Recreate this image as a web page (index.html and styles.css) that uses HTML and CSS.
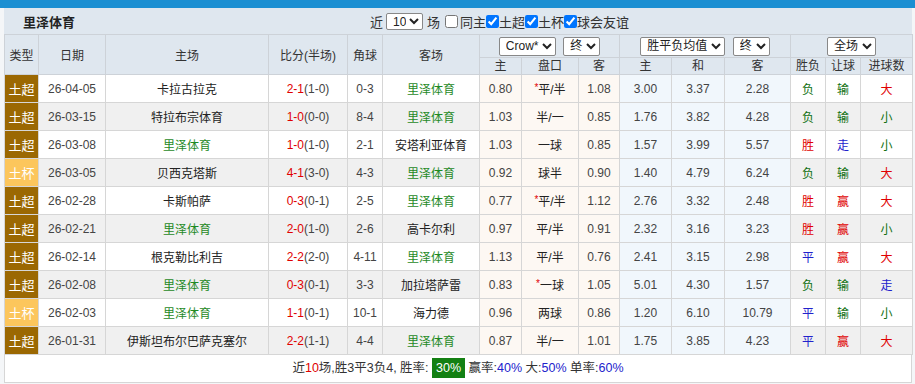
FILE: index.html
```html
<!DOCTYPE html>
<html lang="zh-CN">
<head>
    <meta charset="UTF-8">
    <title>里泽体育 - 近期战绩</title>
    <link rel="stylesheet" href="styles.css">
</head>
<body>
    <div class="topbar"></div>
    <div class="panel">
        <div class="panel-head">
            <div class="team-title">里泽体育</div>
            <div class="filters">
                <span>近</span>
                <select class="sel sel-count">
                    <option>10</option>
                    <option>20</option>
                </select>
                <span>场</span>
                <label class="first"><input type="checkbox"><span>同主</span></label>
                <label><input type="checkbox" checked>土超</label>
                <label><input type="checkbox" checked>土杯</label>
                <label><input type="checkbox" checked>球会友谊</label>
            </div>
        </div>
        <table class="records">
            <colgroup>
                <col style="width:34px"><col style="width:67px"><col style="width:163px"><col style="width:79px">
                <col style="width:35px"><col style="width:97px"><col style="width:42px"><col style="width:57px">
                <col style="width:41px"><col style="width:52px"><col style="width:53px"><col style="width:66px">
                <col style="width:35px"><col style="width:35px"><col style="width:52px">
            </colgroup>
            <thead>
                <tr class="head-top">
                    <th rowspan="2">类型</th>
                    <th rowspan="2">日期</th>
                    <th rowspan="2">主场</th>
                    <th rowspan="2">比分(半场)</th>
                    <th rowspan="2">角球</th>
                    <th rowspan="2">客场</th>
                    <th colspan="3">
                        <select class="sel"><option>Crow*</option></select>
                        <select class="sel"><option>终</option></select>
                    </th>
                    <th colspan="3">
                        <select class="sel"><option>胜平负均值</option></select>
                        <select class="sel"><option>终</option></select>
                    </th>
                    <th colspan="3">
                        <select class="sel"><option>全场</option></select>
                    </th>
                </tr>
                <tr class="head-sub">
                    <th>主</th><th>盘口</th><th>客</th>
                    <th>主</th><th>和</th><th>客</th>
                    <th>胜负</th><th>让球</th><th>进球数</th>
                </tr>
            </thead>
            <tbody id="rows"></tbody>
        </table>
        <div class="summary">
            近<span class="red">10</span>场,胜3平3负4, 胜率: <span class="rate">30%</span>
            赢率:<span class="blue">40%</span> 大:<span class="blue">50%</span> 单率:<span class="blue">60%</span>
        </div>
    </div>
    <script>
        // Match data: league, date, home, score, half, corners, away, odds..., results
        const matches = [
            ['土超', '26-04-05', '卡拉古拉克', '2-1', '1-0', '0-3', '里泽体育', '0.80', '*平/半', '1.08', '3.00', '3.37', '2.28', '负', '输', '大'],
            ['土超', '26-03-15', '特拉布宗体育', '1-0', '0-0', '8-4', '里泽体育', '1.03', '半/一', '0.85', '1.76', '3.82', '4.28', '负', '输', '小'],
            ['土超', '26-03-08', '里泽体育', '1-0', '1-0', '2-1', '安塔利亚体育', '1.03', '一球', '0.85', '1.57', '3.99', '5.57', '胜', '走', '小'],
            ['土杯', '26-03-05', '贝西克塔斯', '4-1', '3-0', '4-3', '里泽体育', '0.92', '球半', '0.90', '1.40', '4.79', '6.24', '负', '输', '大'],
            ['土超', '26-02-28', '卡斯帕萨', '0-3', '0-1', '2-5', '里泽体育', '0.77', '*平/半', '1.12', '2.76', '3.32', '2.48', '胜', '赢', '大'],
            ['土超', '26-02-21', '里泽体育', '2-0', '1-0', '2-6', '高卡尔利', '0.97', '平/半', '0.91', '2.32', '3.16', '3.23', '胜', '赢', '小'],
            ['土超', '26-02-14', '根克勒比利吉', '2-2', '2-0', '4-11', '里泽体育', '1.13', '平/半', '0.76', '2.41', '3.15', '2.98', '平', '赢', '大'],
            ['土超', '26-02-08', '里泽体育', '0-3', '0-1', '3-3', '加拉塔萨雷', '0.83', '*一球', '1.05', '5.01', '4.30', '1.57', '负', '输', '走'],
            ['土杯', '26-02-03', '里泽体育', '1-1', '0-1', '10-1', '海力德', '0.96', '两球', '0.86', '1.20', '6.10', '10.79', '平', '输', '小'],
            ['土超', '26-01-31', '伊斯坦布尔巴萨克塞尔', '2-2', '1-1', '4-4', '里泽体育', '0.87', '半/一', '1.01', '1.75', '3.85', '4.23', '平', '赢', '大']
        ];

        const resultClass = { '胜': 'win', '赢': 'win', '大': 'win', '负': 'lose', '输': 'lose', '小': 'lose', '平': 'draw', '走': 'draw' };
        const us = '里泽体育';

        function team(name) {
            return name === us ? `<span class="us">${name}</span>` : name;
        }

        function line(text) {
            return text.startsWith('*') ? `<span class="star">*</span>${text.slice(1)}` : text;
        }

        const tbody = document.getElementById('rows');
        matches.forEach(function(m) {
            const tr = document.createElement('tr');
            tr.innerHTML = `
                <td class="league ${m[0] === '土杯' ? 'cup' : ''}">${m[0]}</td>
                <td class="num">${m[1]}</td>
                <td>${team(m[2])}</td>
                <td class="num"><span class="red">${m[3]}</span>(${m[4]})</td>
                <td class="num">${m[5]}</td>
                <td>${team(m[6])}</td>
                <td class="num odds">${m[7]}</td>
                <td class="odds">${line(m[8])}</td>
                <td class="num odds">${m[9]}</td>
                <td class="num euro">${m[10]}</td>
                <td class="num euro">${m[11]}</td>
                <td class="num euro">${m[12]}</td>
                <td class="${resultClass[m[13]]}">${m[13]}</td>
                <td class="${resultClass[m[14]]}">${m[14]}</td>
                <td class="${resultClass[m[15]]}">${m[15]}</td>`;
            tbody.appendChild(tr);
        });
    </script>
</body>
</html>
```

FILE: styles.css
```css
:root {
    --bar-color: #1b8fd2;
    --head-bg: #dfe7ef;
    --line-color: #cdd2d8;
    --text-color: #333;
    --green: #1f8a1f;
    --red: #e00000;
    --blue: #2222cc;
}

body {
    margin: 0;
    background-color: #f4f6f8;
    font-family: 'Liberation Sans', 'Noto Sans CJK SC', sans-serif;
    font-size: 12px;
    color: var(--text-color);
}

.topbar {
    height: 8px;
    background-color: var(--bar-color);
}

.panel {
    margin: 0 3px 0 4px;
    background-color: white;
}

.panel-head {
    display: flex;
    align-items: center;
    height: 26px;
    background-color: var(--head-bg);
}

.team-title {
    width: 347px;
    padding-left: 19px;
    font-size: 13px;
    font-weight: bold;
    color: #222;
}

.filters {
    display: flex;
    align-items: center;
    font-size: 13px;
}

.filters label {
    display: flex;
    align-items: center;
}

.filters label.first {
    margin-left: 5px;
}

.filters label.first span {
    margin-left: 2px;
}

.filters input {
    margin: 0;
    width: 13px;
    height: 13px;
}

.sel {
    height: 19px;
    padding: 0 0 0 2px;
    font-family: inherit;
    font-size: 12px;
    color: #222;
    background-color: white;
    border: 1px solid #888;
    border-radius: 2px;
}

.sel-count {
    width: 37px;
    height: 17px;
    margin: 0 4px 0 3px;
}

.records {
    width: 908px;
    table-layout: fixed;
    border-collapse: collapse;
}

.records th {
    background-color: var(--head-bg);
    border: 1px solid var(--line-color);
    font-weight: normal;
    color: #333;
    padding: 0;
    text-align: center;
}

.head-top th {
    height: 22px;
}

.head-sub th {
    height: 16px;
    line-height: 16px;
}

.head-top .sel + .sel {
    margin-left: 4px;
}

.records td {
    height: 27px;
    padding: 0;
    border: 1px solid #d6d6d6;
    text-align: center;
    white-space: nowrap;
    color: #222;
}

.records tbody tr:nth-child(even) td {
    background-color: #f0f0f0;
}

.records tbody tr td.num {
    color: #444;
}

.records tbody tr td.league {
    background-color: #9b6802;
    color: white;
    font-size: 13px;
}

.records tbody tr td.league.cup {
    background-color: #fcc65c;
}

.records tbody tr td.odds {
    background-color: #fdf8f3;
}

.records tbody tr td.euro {
    background-color: #f1f7fc;
}

.us {
    color: var(--green);
}

.red, .star {
    color: var(--red);
}

.star {
    font-size: 10px;
    vertical-align: 3px;
}

.records tbody tr td.win {
    color: var(--red);
}

.records tbody tr td.lose {
    color: #107010;
}

.records tbody tr td.draw {
    color: var(--blue);
}

.summary {
    height: 27px;
    line-height: 27px;
    text-align: center;
    border: 1px solid #d6d6d6;
    border-top: none;
    font-size: 12.5px;
    color: #333;
}

.rate {
    display: inline-block;
    line-height: 20px;
    padding: 0 4px;
    background-color: #138013;
    color: white;
}

.blue {
    color: var(--blue);
}
```
